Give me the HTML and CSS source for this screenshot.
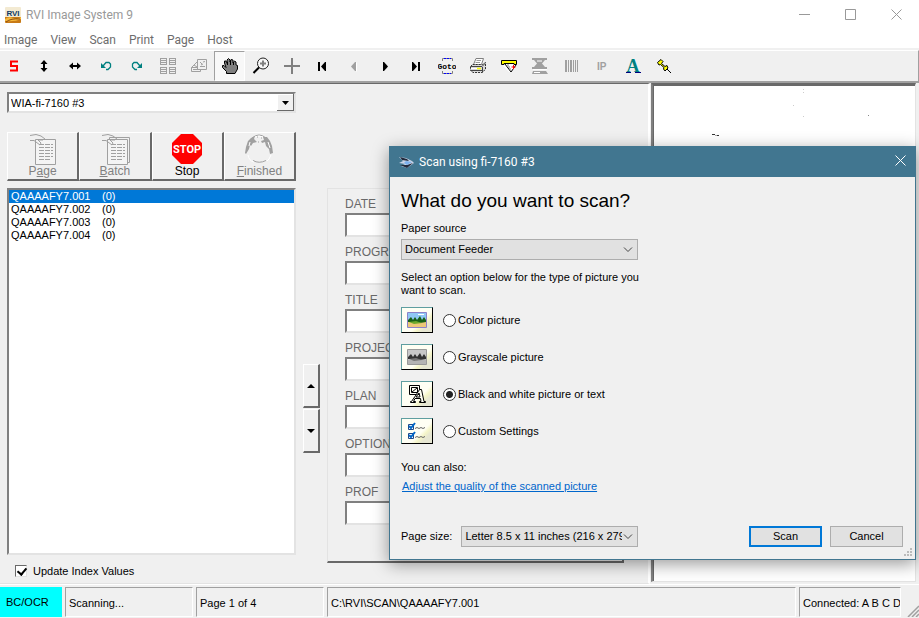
FILE: index.html
```html
<!DOCTYPE html>
<html lang="en">
<head>
    <meta charset="UTF-8">
    <meta name="viewport" content="width=device-width, initial-scale=1.0">
    <title>RVI Image System 9</title>
    <link rel="stylesheet" href="styles.css">
</head>
<body>
    <header class="titlebar">
        <svg class="app-icon" width="16" height="16" viewBox="0 0 16 16">
            <rect width="16" height="16" rx="1" fill="#f3ead2"/>
            <path d="M0 10H16V15Q16 16 15 16H1Q0 16 0 15Z" fill="#c87a16"/>
            <path d="M0 12Q4 9 8 11T16 10V12Q10 15 0 14Z" fill="#f5b93c"/>
            <path d="M1 15Q6 11 15 12" stroke="#8a4b10" fill="none"/>
            <text x="8" y="9" text-anchor="middle" class="app-icon-text">RVI</text>
        </svg>
        <span class="app-title">RVI Image System 9</span>
        <div class="window-buttons">
            <button aria-label="Minimize"><svg width="11" height="11"><path d="M0 5.5H11" stroke="#999"/></svg></button>
            <button aria-label="Maximize"><svg width="11" height="11"><path d="M.5.5H10.500V10.500H.5Z" stroke="#999" fill="none"/></svg></button>
            <button aria-label="Close"><svg width="11" height="11"><path d="M.5.5L10.500 10.500M10.500.5L.5 10.500" stroke="#999"/></svg></button>
        </div>
    </header>
    <nav class="menu">
        <a href="#">Image</a>
        <a href="#">View</a>
        <a href="#">Scan</a>
        <a href="#">Print</a>
        <a href="#">Page</a>
        <a href="#">Host</a>
    </nav>
    <div class="toolbar">
        <button aria-label="Scan"><svg width="16" height="16"><path d="M12 3.500H5V8H11V12.500H4" stroke="#f00" stroke-width="2" fill="none"/></svg></button>
        <button aria-label="Fit height"><svg width="16" height="16"><path d="M8 4V12" stroke="#000" stroke-width="2"/><path d="M8 2L11.500 6H4.500ZM8 14L11.500 10H4.500Z"/></svg></button>
        <button aria-label="Fit width"><svg width="16" height="16"><path d="M4 8H12" stroke="#000" stroke-width="2"/><path d="M2 8L6 4.500V11.500ZM14 8L10 4.500V11.500Z"/></svg></button>
        <button aria-label="Rotate left"><svg width="16" height="16"><path d="M5 8L8 4.500H11L12.500 6V9L10 11.500H8" stroke="#008080" stroke-width="1.300" fill="none"/><path d="M3 5V10H8Z" fill="#008080"/></svg></button>
        <button aria-label="Rotate right"><svg width="16" height="16"><path d="M11 8L8 4.500H5L3.500 6V9L6 11.500H8" stroke="#008080" stroke-width="1.300" fill="none"/><path d="M13 5V10H8Z" fill="#008080"/></svg></button>
        <button aria-label="Thumbnails" disabled><svg width="18" height="18" shape-rendering="crispEdges"><path d="M1.500 1.500H7.500V7.500H1.500ZM10.500 1.500H16.500V7.500H10.500ZM1.500 10.500H7.500V16.500H1.500ZM10.500 10.500H16.500V16.500H10.500ZM2 3.500H7M2 5.500H7M11 3.500H16M11 5.500H16M2 12.500H7M2 14.500H7M11 12.500H16M11 14.500H16" stroke="#a0a0a0" fill="none"/></svg></button>
        <button aria-label="Compare" disabled><svg width="18" height="18"><path d="M7.500 2.500H16.500V12.500H7.500ZM7 5L1.500 10.500V14.500H10.500V12.500M1.500 10.500H7M4 8L7 10M3 12.500H8M10 5L12 7M13 5L15 4.500M10 9.500H15M11 8L13 7" stroke="#a0a0a0" fill="none"/></svg></button>
        <button class="pressed" aria-label="Pan"><svg width="18" height="18"><path d="M5.500 16.500V14.500L1.500 10.500V8.500H3L5 10.500L3.500 6V4H5L6.500 7L6 3L7.500 1.500L9 3V5L10 2.500L12 3V6L13.500 4L15 5V8L16.500 8.500V12L14 16.500Z" fill="#808080" stroke="#000"/><path d="M6.500 5V8M9.500 4V8M12.500 5V8" stroke="#000"/></svg></button>
        <button aria-label="Zoom"><svg width="18" height="18"><circle cx="11" cy="6.500" r="5.500" fill="#f8f8f8" stroke="#222" stroke-width="1"/><path d="M8 6.500H14M11 3.500V9.500" stroke="#808080" stroke-width="2"/><path d="M7 10.500L1.500 16" stroke="#000" stroke-width="2"/></svg></button>
        <button aria-label="Crosshair"><svg width="18" height="18"><path d="M1 9H17M9 1V17" stroke="#808080" stroke-width="2"/></svg></button>
        <button aria-label="First page"><svg width="16" height="16"><path d="M3 4H5V13H3ZM6 8.500L10 4H11V13H10Z"/></svg></button>
        <button aria-label="Previous page" disabled><svg width="16" height="16"><path d="M5 8.500L9 4H10V13H9Z" fill="#a0a0a0"/><path d="M10.500 4.500V13.500" stroke="#fff"/></svg></button>
        <button aria-label="Next page"><svg width="16" height="16"><path d="M6 4H7L11 8.500L7 13H6Z"/></svg></button>
        <button aria-label="Last page"><svg width="16" height="16"><path d="M4 4H5L9 8.500L5 13H4ZM10 4H12V13H10Z"/></svg></button>
        <button aria-label="Go to page"><svg width="18" height="18"><path d="M4.500 4V1.500H14.500V4M4.500 14V16.500H14.500V14" stroke="#808080" fill="none"/><path d="M6 1.500H13M6 16.500H13" stroke="#00f" stroke-dasharray="2 1"/><text x="9" y="12" text-anchor="middle" class="goto-text">Goto</text></svg></button>
        <button aria-label="Print"><svg width="18" height="18"><path d="M4.500 7.500L7 1.500H14.500L12.500 7.500Z" fill="#fff" stroke="#808080"/><path d="M1.500 9.500L3.500 7.500H13.500L16.500 5.500V12L13.500 15.500H4L1.500 13.500Z" fill="#d8d8d8" stroke="#333" stroke-dasharray="2 1"/><path d="M7.500 3.500H12M6.500 5.500H11" stroke="#999"/><path d="M2 9.500H13L16 6.500M2 13.500H13M13.500 10V15" stroke="#444" fill="none"/><path d="M2 11.500H9" stroke="#fff"/><path d="M8 11.500H12" stroke="#ff0" stroke-width="1.500"/></svg></button>
        <button aria-label="Annotate"><svg width="18" height="18"><path d="M1.500 3.500H16.500V7L10 15H9L1.500 7Z" fill="#fff"/><path d="M1.500 3.500H16.500V7.500H14V6.500H4V7.500H1.500Z" fill="#ff0" stroke="#000"/><path d="M5 7L11 15L16 8" stroke="#000" fill="none"/><path d="M7 8L9 8M8 10H10M9 12H11" stroke="#808080"/><path d="M11.500 10H15.500M13.500 8V12" stroke="#f00"/></svg></button>
        <button aria-label="Scanner" disabled><svg width="18" height="18"><path d="M1 1H16V3H14L11 6.500L14 10H16V12H1V10H3L6 6.500L3 3H1ZM2 14H15L17 17H1Z" fill="#a0a0a0"/><path d="M3 15.500H9M2 12.500H16M6 4H11" stroke="#fff"/></svg></button>
        <button aria-label="Barcode" disabled><svg width="16" height="16" shape-rendering="crispEdges"><path d="M2 2H4V14H2ZM5 2H6V14H5ZM7 2H9V14H7ZM10 2H11V14H10ZM12 2H13V14H12ZM14 2H15V14H14Z" fill="#a0a0a0"/></svg></button>
        <button aria-label="Image processing" disabled><svg width="18" height="18"><text x="4" y="13" class="ip-text">IP</text></svg></button>
        <button aria-label="Text"><svg width="18" height="18"><text x="9" y="15" text-anchor="middle" class="font-text">A</text><path d="M2 15.500H7M11 15.500H17" stroke="#000080"/></svg></button>
        <button aria-label="Pin"><svg width="18" height="18"><path d="M11 11L16 16" stroke="#000"/><path d="M2.500 5.500L6 2.500L8 4.500L6.500 6.500L10 9.500L12 8.500L13 11L10 14L8.500 12L9 10.500L5.500 7.500L4 8Z" fill="#ff0" stroke="#000"/></svg></button>
    </div>

    <main class="workspace">
        <section class="left-pane">
            <div class="sidebar">
                <select class="scanner-select" aria-label="Scanner">
                    <option>WIA-fi-7160 #3</option>
                </select>
                <div class="scan-buttons">
                    <button disabled>
                        <svg width="32" height="32"><path d="M8.500 6.500H28.500V31.500H8.500Z" fill="#f4f4f4" stroke="#a0a0a0"/><path d="M12 11.500H26M12 14.500H26M12 17.500H26M12 20.500H26M12 23.500H26M12 26.500H24" stroke="#a0a0a0" stroke-dasharray="5 1"/><path d="M3 2.500L9 1.500L14 3L18 6M3 7.500H7L13 12L14 10L11 7L16 7" stroke="#a0a0a0" fill="none"/></svg>
                        <span>P<u>a</u>ge</span>
                    </button>
                    <button disabled>
                        <svg width="32" height="32"><path d="M10.500 4.500H30.500V29.500H10.500Z" fill="#f0f0f0" stroke="#a0a0a0"/><path d="M8.500 6.500H28.500V31.500H8.500Z" fill="#f4f4f4" stroke="#a0a0a0"/><path d="M12 11.500H26M12 14.500H26M12 17.500H26M12 20.500H26M12 23.500H26M12 26.500H24" stroke="#a0a0a0" stroke-dasharray="5 1"/><path d="M3 2.500L9 1.500L14 3L18 6M3 7.500H7L13 12L14 10L11 7L16 7" stroke="#a0a0a0" fill="none"/></svg>
                        <span><u>B</u>atch</span>
                    </button>
                    <button>
                        <svg width="32" height="32"><path d="M10 1H22L31 10V22L22 31H10L1 22V10Z" fill="#f00"/><text x="16" y="20" text-anchor="middle" class="stop-text">STOP</text></svg>
                        <span>Stop</span>
                    </button>
                    <button disabled>
                        <svg width="32" height="32"><path d="M9 5Q16 -1 23 5M10 27.500Q16 31 23 27.500" stroke="#a0a0a0" fill="none"/><path d="M8 5L12 3L11 6L14 9L10 10L8 13L7 12L6 16L3 21L2 20L3 14L5 8ZM20 4L24 4L27 8L29 13L30 20L27 21L26 16L23 13L22 9L19 10L18 8L21 7Z" fill="#a0a0a0"/><path d="M7 9L6 13M25 9L27 15M5 22Q6 28 11 29M28 22Q26 27 24 28M12 4Q16 2 20 4" stroke="#fff" fill="none"/><path d="M15 9H16M14 4H15M18 5H19" stroke="#a0a0a0"/></svg>
                        <span><u>F</u>inished</span>
                    </button>
                </div>
                <ul class="file-list">
                    <li class="selected"><span>QAAAAFY7.001</span><span>(0)</span></li>
                    <li><span>QAAAAFY7.002</span><span>(0)</span></li>
                    <li><span>QAAAAFY7.003</span><span>(0)</span></li>
                    <li><span>QAAAAFY7.004</span><span>(0)</span></li>
                </ul>
                <label class="update-check"><input type="checkbox" checked> Update Index Values</label>
            </div>
            <div class="movers">
                <button aria-label="Move up"><svg width="8" height="4"><path d="M4 0L8 4H0Z"/></svg></button>
                <button aria-label="Move down"><svg width="8" height="4"><path d="M0 0H8L4 4Z"/></svg></button>
            </div>
            <form class="index-form">
                <label for="date">DATE</label><input type="text" id="date">
                <label for="program">PROGRAM</label><input type="text" id="program">
                <label for="doctitle">TITLE</label><input type="text" id="doctitle">
                <label for="project">PROJECT</label><input type="text" id="project">
                <label for="plan">PLAN</label><input type="text" id="plan">
                <label for="option">OPTION</label><input type="text" id="option">
                <label for="prof">PROF</label><input type="text" id="prof">
            </form>
        </section>
        <section class="viewer">
            <svg width="240" height="60"><path d="M150 4h1v1h-1ZM150 7h1v1h-1ZM140 20h1v1h-1ZM150 31h1v1h-1Z" fill="#ccc"/><path d="M215 30h1v1h-1Z" fill="#888"/><path d="M59 49h3v1h-3ZM64 50h2v1h-2Z" fill="#333"/><path d="M62 50h2v1h-2Z" fill="#aaa"/></svg>
        </section>
    </main>

    <footer class="statusbar">
        <div class="ocr">BC/OCR</div>
        <div>Scanning...</div>
        <div>Page 1 of 4</div>
        <div>C:\RVI\SCAN\QAAAAFY7.001</div>
        <div>Connected: A B C D</div>
        <svg class="grip" width="12" height="12"><path d="M1 12L12 1M5 12L12 5M9 12L12 9" stroke="#a0a0a0" stroke-width="1.500"/></svg>
    </footer>

    <div class="dialog" role="dialog" aria-labelledby="dialog-title">
        <div class="dialog-title">
            <svg width="17" height="13"><path d="M1 1L8 2L14 5L16 7L9 12L3 10L7 8L1 7L5 5Z" fill="#c9d3e6"/><path d="M2 1L9 3L11 5L4 4ZM2 9L9 9L15 7L9 12Z" fill="#222a3c"/><path d="M8 5L14 6L9 9L6 7Z" fill="#7cb0ec"/></svg>
            <span id="dialog-title">Scan using fi-7160 #3</span>
            <button aria-label="Close"><svg width="11" height="11"><path d="M.5.5L10.500 10.500M10.500.5L.5 10.500" stroke="#fff"/></svg></button>
        </div>
        <div class="dialog-body">
            <h1>What do you want to scan?</h1>
            <label class="source-label" for="source">Paper source</label>
            <div class="drop source">
                <select id="source"><option>Document Feeder</option></select>
                <svg width="10" height="6"><path d="M1 .5L5 4.500L9 .5" stroke="#444" fill="none"/></svg>
            </div>
            <p class="hint">Select an option below for the type of picture you want to scan.</p>
            <div class="options">
                <div class="option">
                    <span class="thumb"><svg width="20" height="16"><path d="M.5.5H19.500V15.500H.5Z" fill="#8fc8f4" stroke="#8c82c8"/><path d="M1 10H19V15H1Z" fill="#ecc878"/><path d="M1 8L4 5L6 8L8 5L10 8L13 4L15 8L17 5L19 8V10L13 11L5 10H1Z" fill="#176117"/><path d="M2 10L9 9L15 11L7 12Z" fill="#6ca82c"/><path d="M11 2H17V3H11Z" fill="#fff"/></svg></span>
                    <input type="radio" name="type" id="color"><label for="color">Color picture</label>
                </div>
                <div class="option">
                    <span class="thumb"><svg width="20" height="16"><path d="M.5.5H19.500V15.500H.5Z" fill="#c8c8c8" stroke="#999"/><path d="M1 11H19V15H1Z" fill="#b4b4b4"/><path d="M1 8L4 5L6 8L8 5L10 8L13 4L15 8L17 5L19 8V10L13 11L5 10H1Z" fill="#333"/><path d="M2 10L9 9L15 11L7 12Z" fill="#777"/></svg></span>
                    <input type="radio" name="type" id="gray"><label for="gray">Grayscale picture</label>
                </div>
                <div class="option">
                    <span class="thumb"><svg width="18" height="20"><path d="M1.500 1.500H11.500V10.500H1.500ZM3.500 3.500H9.500V8.500H3.500ZM4 8L9 4" stroke="#000" fill="none"/><path d="M11.500 5.500H13.500L16 17.500H17.500V18.500H11.500V17.500H13L12.500 14.500H7L5.500 17.500H7.500V18.500H2.500V17.500H3.500L8 11ZM8 13H12L11 9Z" fill="#fffff4" stroke="#000"/></svg></span>
                    <input type="radio" name="type" id="bw" checked><label for="bw">Black and white picture or text</label>
                </div>
                <div class="option">
                    <span class="thumb"><svg width="20" height="18"><path d="M1.500 2.500H6.500V7.500H1.500ZM1.500 11.500H6.500V16.500H1.500Z" fill="#fff" stroke="#204888"/><path d="M2 4L4 6L8 1M2 13L4 15L8 10" stroke="#0067c8" stroke-width="2" fill="none"/><path d="M8 6.500L10 5.500L12 6.500L14 5.500L16 6.500L18 5.500M8 15.500L10 14.500L12 15.500L14 14.500L16 15.500L18 14.500" stroke="#666" fill="none"/></svg></span>
                    <input type="radio" name="type" id="custom"><label for="custom">Custom Settings</label>
                </div>
            </div>
            <p class="also">You can also:</p>
            <a class="adjust" href="#">Adjust the quality of the scanned picture</a>
            <div class="dialog-foot">
                <label for="pagesize">Page size:</label>
                <div class="drop pagesize">
                    <select id="pagesize"><option>Letter 8.5 x 11 inches (216 x 279 mm)</option></select>
                    <svg width="10" height="6"><path d="M1 .5L5 4.500L9 .5" stroke="#444" fill="none"/></svg>
                </div>
                <button class="primary">Scan</button>
                <button>Cancel</button>
            </div>
        </div>
        <svg class="dialog-grip" width="8" height="8"><path d="M6 0h2v2h-2ZM3 3h2v2h-2ZM6 3h2v2h-2ZM0 6h2v2h-2ZM3 6h2v2h-2ZM6 6h2v2h-2Z" fill="#bbb"/></svg>
    </div>
</body>
</html>
```
FILE: styles.css
```css
* {
    box-sizing: border-box;
}
body {
    margin: 0;
    height: 100vh;
    display: flex;
    flex-direction: column;
    overflow: hidden;
    background-color: #f0f0f0;
    color: #000;
    font-family: "Liberation Sans", Arial, sans-serif;
    font-size: 11px;
}
button, input, select {
    font: inherit;
    color: inherit;
    margin: 0;
    padding: 0;
    border-radius: 0;
}
svg {
    flex: none;
}

/* title bar and menu */
.titlebar {
    display: flex;
    align-items: center;
    height: 29px;
    padding-left: 5px;
    background-color: #fff;
    color: #999;
    font-family: Roboto, sans-serif;
    font-size: 12px;
}
.app-title {
    margin-left: 5px;
}
.app-icon-text {
    font: bold 8px "Liberation Sans", sans-serif;
    fill: #123a66;
}
.window-buttons {
    display: flex;
    margin-left: auto;
}
.window-buttons button {
    display: flex;
    align-items: center;
    justify-content: center;
    width: 46px;
    height: 28px;
    border: none;
    background: none;
}
.menu {
    display: flex;
    gap: 13px;
    height: 21px;
    padding: 0 4px;
    background-color: #fff;
    border-bottom: 2px solid #f0f0f0;
    font-family: Roboto, sans-serif;
    font-size: 12px;
    line-height: 22px;
}
.menu a {
    color: #6d6d6d;
    text-decoration: none;
}

/* toolbar */
.toolbar {
    display: flex;
    height: 33px;
    border-top: 1px solid #fff;
    border-right: 1px solid #a0a0a0;
    border-bottom: 2px solid #a0a0a0;
}
.toolbar button {
    display: flex;
    align-items: center;
    justify-content: center;
    width: 31px;
    border: none;
    background: none;
}
.toolbar button:first-child {
    width: 28px;
}
.toolbar .pressed {
    border: 1px solid #fff;
    border-top-color: #a0a0a0;
    border-left-color: #a0a0a0;
    background-color: #f8f8f8;
}
.goto-text {
    font: bold 8px "Liberation Mono", monospace;
}
.ip-text {
    font: bold 10px "Liberation Sans", sans-serif;
    fill: #a0a0a0;
}
.font-text {
    font: bold 18px "Liberation Serif", serif;
    fill: #008080;
}

/* workspace */
.workspace {
    flex: 1;
    min-height: 0;
    display: grid;
    grid-template-columns: 650px 1fr;
    grid-template-rows: 100%;
}
.left-pane {
    display: flex;
    padding: 8px 24px 0 7px;
    border-top: 1px solid #696969;
    border-right: 2px solid #fff;
    border-bottom: 1px solid #e3e3e3;
}
.sidebar {
    display: flex;
    flex-direction: column;
    width: 289px;
}
.scanner-select {
    appearance: none;
    height: 21px;
    padding: 0 2px;
    border: 2px solid;
    border-color: #808080 #e3e3e3 #e3e3e3 #808080;
    background: #fff url("data:image/svg+xml,%3Csvg xmlns='http://www.w3.org/2000/svg' width='17' height='17'%3E%3Cpath d='M0 0H17V17H0Z' fill='%23696969'/%3E%3Cpath d='M0 0H16V16H0Z' fill='%23fff'/%3E%3Cpath d='M1 1H16V16H1Z' fill='%23f0f0f0'/%3E%3Cpath d='M5 7H12L8.5 11Z'/%3E%3C/svg%3E") no-repeat right center;
}
.scan-buttons {
    display: flex;
    height: 49px;
    margin: 19px 0 7px;
}
.scan-buttons button {
    flex: 1;
    display: flex;
    flex-direction: column;
    align-items: center;
    border: 1px solid #fff;
    border-right: 2px solid #696969;
    border-bottom: 2px solid #696969;
    background-color: #f0f0f0;
    font-size: 12px;
    line-height: 13px;
}
.scan-buttons button:disabled {
    color: #808080;
}
.stop-text {
    font: bold 11px Roboto, sans-serif;
    fill: #fff;
}
.file-list {
    flex: 1;
    margin: 0;
    padding: 0;
    list-style: none;
    border: 2px solid;
    border-color: #808080 #e3e3e3 #e3e3e3 #808080;
    background-color: #fff;
}
.file-list li {
    display: grid;
    grid-template-columns: 91px 1fr;
    padding-left: 2px;
    line-height: 13px;
}
.file-list .selected {
    background-color: #0078d7;
    color: #fff;
}
.update-check {
    display: flex;
    align-items: center;
    gap: 6px;
    height: 28px;
    padding: 3px 8px 0;
}
.update-check input {
    appearance: none;
    width: 12px;
    height: 12px;
    border: 1px solid;
    border-color: #696969 #e3e3e3 #e3e3e3 #696969;
    background-color: #fff;
}
.update-check input:checked::before {
    content: "";
    display: block;
    width: 4px;
    height: 7px;
    margin: 0 3px;
    border: solid #000;
    border-width: 0 2px 2px 0;
    transform: rotate(40deg);
}
.movers {
    display: flex;
    flex-direction: column;
    gap: 1px;
    margin: 272px 7px 0;
}
.movers button {
    display: flex;
    align-items: center;
    justify-content: center;
    width: 17px;
    height: 44px;
    border: 1px solid #fff;
    border-right: 2px solid #696969;
    border-bottom: 2px solid #696969;
    background-color: #f0f0f0;
}
.index-form {
    flex: 1;
    display: flex;
    flex-direction: column;
    margin: 96px 0 20px;
    padding: 7px 17px;
    border: 1px solid #e3e3e3;
    border-right: 2px solid #696969;
    border-bottom: 2px solid #696969;
    color: #696969;
    font-size: 12px;
}
.index-form label {
    line-height: 16px;
}
.index-form input {
    height: 24px;
    margin: 1px 0 7px;
    border: 2px solid;
    border-color: #808080 #e3e3e3 #e3e3e3 #808080;
    background-color: #fff;
}
.viewer {
    margin: 0 3px 2px 1px;
    border: 1px solid #e3e3e3;
    border-top: 2px solid #696969;
    border-left: 2px solid #808080;
    box-shadow: inset 1px 1px #696969;
    background-color: #fff;
}

/* status bar */
.statusbar {
    display: grid;
    grid-template-columns: 62px 128px 128px 1fr 102px 15px;
    gap: 3px;
    height: 34px;
    padding: 2px 0 1px;
    border-top: 1px solid #fff;
    line-height: 30px;
    white-space: nowrap;
}
.statusbar div {
    padding-left: 3px;
    border: 1px solid #a0a0a0;
    border-right-color: #fff;
    border-bottom-color: #fff;
    overflow: hidden;
}
.statusbar .ocr {
    padding-left: 6px;
    border: none;
    background-color: #0ff;
}
.grip {
    align-self: end;
    justify-self: end;
}

/* scan dialog */
.dialog {
    position: absolute;
    left: 389px;
    top: 146px;
    right: 3px;
    border: 1px solid #417690;
    background-color: #f0f0f0;
    box-shadow: 0 4px 16px rgba(0, 0, 0, 0.4);
}
.dialog-title {
    display: flex;
    align-items: center;
    gap: 4px;
    height: 30px;
    padding: 0 9px 0 8px;
    background-color: #417690;
    color: #fff;
    font-family: Roboto, sans-serif;
    font-size: 12px;
}
.dialog-title button {
    margin-left: auto;
    border: none;
    background: none;
}
.dialog-body {
    padding: 12px 12px 12px 11px;
    line-height: 13px;
}
.dialog h1 {
    margin: 0 0 9px;
    font-size: 19px;
    font-weight: normal;
    line-height: 24px;
}
.source-label {
    display: block;
    margin-bottom: 4px;
}
.drop {
    display: flex;
    align-items: center;
    height: 21px;
    padding: 0 4px 0 3px;
    border: 1px solid #adadad;
    background-color: #e1e1e1;
}
.drop select {
    appearance: none;
    flex: 1;
    min-width: 0;
    margin-right: 1px;
    border: none;
    background: none;
}
.source {
    width: 237px;
}
.hint {
    width: 246px;
    margin: 11px 0 10px;
}
.options {
    display: flex;
    flex-direction: column;
    gap: 11px;
}
.option {
    display: flex;
    align-items: center;
}
.thumb {
    display: flex;
    align-items: center;
    justify-content: center;
    width: 32px;
    height: 26px;
    margin-right: 10px;
    border: 1px solid #5f9ea0;
    border-right-color: #000;
    border-bottom-color: #000;
    background: linear-gradient(135deg, #fffff4 60%, #f5f5c8 70%, #e6e6d2 80%);
}
.option input {
    appearance: none;
    width: 13px;
    height: 13px;
    margin-right: 2px;
    border: 1px solid #333;
    border-radius: 50%;
    background-color: #fff;
}
.option input:checked {
    background: radial-gradient(#222 0 3px, #fff 4px);
}
.also {
    margin: 17px 0 6px;
}
.adjust {
    padding-left: 1px;
    color: #0066cc;
}
.dialog-foot {
    display: flex;
    align-items: center;
    margin-top: 33px;
}
.pagesize {
    width: 177px;
    margin: 0 auto 0 9px;
}
.dialog-foot button {
    width: 73px;
    height: 21px;
    margin-left: 8px;
    border: 1px solid #adadad;
    background-color: #e1e1e1;
}
.dialog-foot .primary {
    border: 2px solid #0078d7;
}
.dialog-grip {
    position: absolute;
    right: 3px;
    bottom: 3px;
}
```
